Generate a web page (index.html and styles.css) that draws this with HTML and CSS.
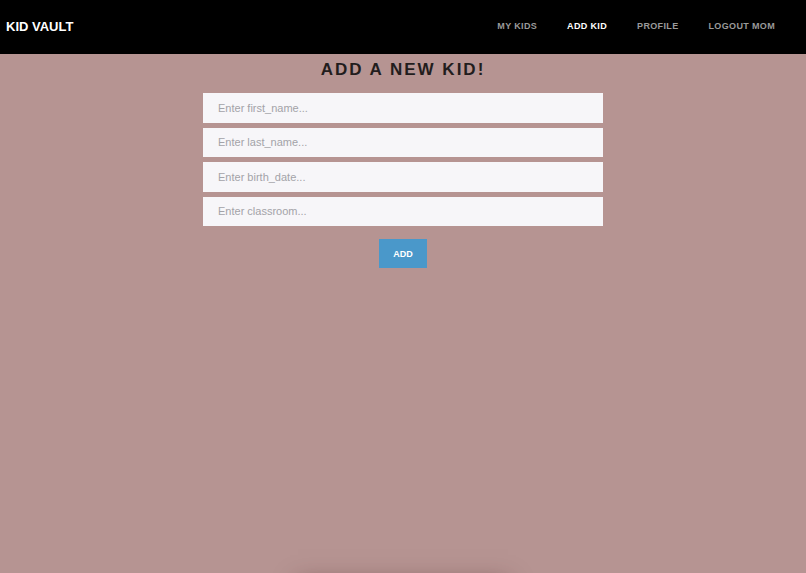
FILE: index.html
```html
<!DOCTYPE html>
<html lang="en">

<head>
    <meta charset="UTF-8">
    <meta name="viewport" content="width=device-width, initial-scale=1.0">
    <title>Kid Vault - Add Kid</title>
    <link rel="stylesheet" href="styles.css">
</head>

<body>
    <header>
        <a class="logo" href="#">KID VAULT</a>
        <nav>
            <a href="#">MY KIDS</a>
            <a href="#" class="active">ADD KID</a>
            <a href="#">PROFILE</a>
            <a href="#">LOGOUT MOM</a>
        </nav>
    </header>
    <div class="container">
        <h1>ADD A NEW KID!</h1>
        <form id="addKidForm">
            <input type="text" name="first_name" placeholder="Enter first_name...">
            <input type="text" name="last_name" placeholder="Enter last_name...">
            <input type="text" name="birth_date" placeholder="Enter birth_date...">
            <input type="text" name="classroom" placeholder="Enter classroom...">
            <button type="submit">ADD</button>
        </form>
        <!-- tarjetas de los niños, fuera de la vista -->
        <div class="kid-list"></div>
    </div>
</body>

</html>
```

FILE: styles.css
```css
body {
    font-family: "Liberation Sans", Arial, sans-serif;
    background-color: #b69492;
    margin: 0;
    padding: 0;
    overflow: hidden;
}

header {
    background-color: #000;
    height: 54px;
    padding: 0 31px 2px 6px;
    box-sizing: border-box;
    display: flex;
    justify-content: space-between;
    align-items: center;
}

header a {
    text-decoration: none;
}

.logo {
    color: white;
    font-size: 13px;
    font-weight: bold;
}

nav {
    display: flex;
    gap: 30px;
}

nav a {
    color: #9a9a9a;
    font-size: 9px;
    font-weight: bold;
    letter-spacing: 0.35px;
}

nav a.active {
    color: white;
}

.container {
    display: flex;
    flex-direction: column;
    align-items: center;
}

h1 {
    margin: 6px 0 13px;
    font-size: 17px;
    letter-spacing: 2px;
    color: #221d1d;
    line-height: 20px;
}

form {
    width: 400px;
    display: flex;
    flex-direction: column;
    align-items: center;
    gap: 5px;
}

input[type="text"] {
    width: 100%;
    height: 29.5px;
    padding: 0 15px;
    box-sizing: border-box;
    border: none;
    background-color: #f7f6f9;
    font-family: inherit;
    font-size: 11px;
    outline: none;
}

input::placeholder {
    color: #a3a3a8;
}

button {
    margin-top: 8px;
    width: 48px;
    height: 29px;
    background-color: #4a98ca;
    color: white;
    border: none;
    font-family: inherit;
    font-size: 9px;
    font-weight: bold;
    cursor: pointer;
}

.kid-list {
    margin-top: 314px;
    width: 210px;
    height: 120px;
    box-shadow: 0 0 22px rgba(70, 30, 30, 0.5);
    background-color: #b69492;
}
```
